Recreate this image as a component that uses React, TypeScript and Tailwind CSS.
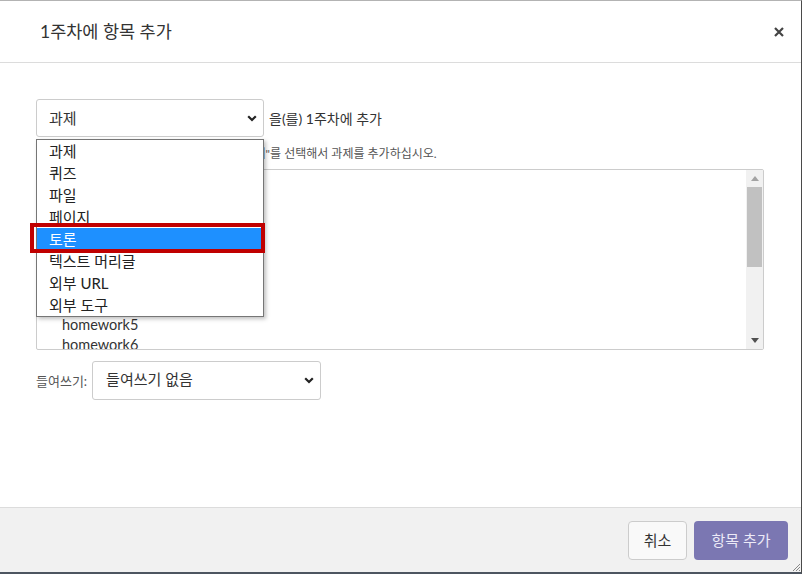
import React from "react";

const FONT = "font-['Lato','Noto_Sans_CJK_KR',sans-serif]";

const TYPES = ["과제", "퀴즈", "파일", "페이지", "토론", "텍스트 머리글", "외부 URL", "외부 도구"];

function Chevron() {
  return (
    <svg width="10" height="7" viewBox="0 0 10 7" className="shrink-0">
      <path d="M1.2 1.2 L5 5 L8.8 1.2" fill="none" stroke="#222" strokeWidth="2.2" />
    </svg>
  );
}

function Scrollbar() {
  return (
    <div className="flex w-[17px] shrink-0 flex-col bg-[#f1f1f1]">
      <div className="flex h-[17px] items-center justify-center">
        <svg width="8" height="5" viewBox="0 0 8 5">
          <path d="M0 5 L4 0 L8 5 Z" fill="#a3a3a3" />
        </svg>
      </div>
      <div className="mx-[1px] h-[80px] bg-[#c1c1c1]" />
      <div className="flex-1" />
      <div className="flex h-[17px] items-center justify-center">
        <svg width="8" height="5" viewBox="0 0 8 5">
          <path d="M0 0 L8 0 L4 5 Z" fill="#505050" />
        </svg>
      </div>
    </div>
  );
}

export default function App() {
  return (
    <div
      className={`flex h-[574px] w-[802px] flex-col border-t border-r border-b-2 border-t-[#b3b3b3] border-r-[#4a4a4a] border-b-[#4d5560] bg-white text-[#333] ${FONT}`}
    >
      {/* 머리글 */}
      <div className="flex h-[62px] shrink-0 items-center justify-between border-b border-[#dcdcdc] pl-10 pr-[17px]">
        <h1 className="pt-[2px] text-[17.5px] font-normal text-[#333]">1주차에 항목 추가</h1>
        <svg width="10" height="10" viewBox="0 0 10 10">
          <path d="M1 1 L9 9 M9 1 L1 9" stroke="#444" strokeWidth="2.2" />
        </svg>
      </div>

      {/* 본문 */}
      <div className="flex-1 px-9 pt-9">
        <div className="relative">
          <div className="flex items-center gap-[5px]">
            <div className="flex h-[38px] w-[228px] items-center justify-between rounded-[3px] border border-[#ccc] pl-[12px] pr-[6px] text-[15px] text-[#333]">
              <span>과제</span>
              <Chevron />
            </div>
            <span className="text-[14px] text-[#333]">을(를) 1주차에 추가</span>
          </div>

          <p className="mt-[9px] whitespace-nowrap text-[12px] leading-[16px] text-[#555]">
            과제를 추가하려면 위 드롭다운 목록에서 "과제"를 선택해서 과제를 추가하십시오.
          </p>

          <div className="mt-[7px] flex h-[181px] w-[728px] overflow-hidden rounded-[2px] border border-[#ccc]">
            <div className="flex-1 pt-[45px] text-[14.5px] leading-[20px] text-[#333]">
              <div className="pl-1 font-bold">과제</div>
              {["homework1", "homework2", "homework3", "homework4", "homework5", "homework6"].map((h) => (
                <div key={h} className="pl-[25px]">
                  {h}
                </div>
              ))}
            </div>
            <Scrollbar />
          </div>

          {/* 펼쳐진 선택 목록 */}
          <div className="absolute left-0 top-[40px] w-[228px] border border-[#767676] bg-white shadow-[2px_2px_4px_rgba(0,0,0,0.25)]">
            {TYPES.map((t) =>
              t === "토론" ? (
                <div key={t} className="relative h-[22px] bg-[#1e90ff] pl-[12px] text-[15px] leading-[22px] text-white">
                  {t}
                  <span className="absolute -bottom-[3px] -left-[7px] -right-[2px] -top-[5px] border-[4px] border-[#c00000]" />
                </div>
              ) : (
                <div key={t} className="h-[22px] pl-[12px] text-[15px] leading-[22px] text-[#222]">
                  {t}
                </div>
              )
            )}
          </div>
        </div>

        <div className="mt-[11px] flex items-center gap-[5px]">
          <span className="pt-[2px] text-[13px] text-[#555]">들여쓰기:</span>
          <div className="flex h-[39px] w-[229px] items-center justify-between rounded-[3px] border border-[#ccc] pl-[13px] pr-[6px] text-[15px] text-[#333]">
            <span className="-mt-[2px]">들여쓰기 없음</span>
            <Chevron />
          </div>
        </div>
      </div>

      {/* 바닥글 */}
      <div className="relative flex h-[65px] shrink-0 items-center justify-end gap-[7px] border-t border-[#dcdcdc] bg-[#f1f1f1] pr-[13px]">
        <button className="h-[39px] w-[59px] rounded-[4px] border border-[#ccc] bg-[#f9f9f9] text-[15px] text-[#333]">
          취소
        </button>
        <button className="h-[39px] w-[94px] rounded-[4px] bg-[#7b77b2] text-[15px] text-[#eceaf7]">
          항목 추가
        </button>
        <svg width="8" height="8" viewBox="0 0 8 8" className="absolute bottom-[1px] right-[1px]">
          <path d="M8 1 L1 8 M8 4 L4 8 M8 7 L7 8" stroke="#888" strokeWidth="1" />
        </svg>
      </div>
    </div>
  );
}
